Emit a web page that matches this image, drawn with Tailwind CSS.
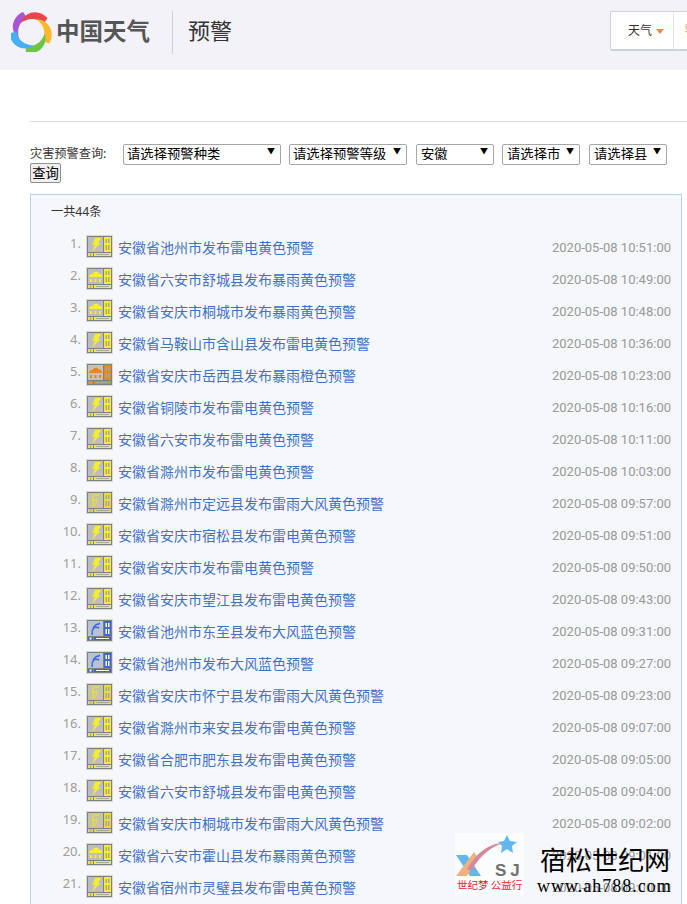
<!DOCTYPE html>
<html lang="zh-CN">
<head>
    <meta charset="UTF-8">
    <title>预警</title>
    <script src="https://cdn.jsdelivr.net/npm/@tailwindcss/browser@4"></script>
</head>
<body class="bg-white h-[904px] overflow-hidden relative font-['Noto_Sans','Noto_Sans_CJK_SC',sans-serif]">
<header class="h-[70px] bg-[#f2f2f8] flex items-start overflow-hidden">
    <svg class="ml-[11px] mt-[11px] w-[41px] h-[41px] shrink-0" viewBox="11 11 41 41">
        <path fill="#a855d8" d="M23 12C13 16 8 30 19 39C16.500 30 19 21 27.500 18.500Z"/>
        <path fill="#e8474c" transform="rotate(72 31 32)" d="M23 12C13 16 8 30 19 39C16.500 30 19 21 27.500 18.500Z"/>
        <path fill="#fbb829" transform="rotate(144 31 32)" d="M23 12C13 16 8 30 19 39C16.500 30 19 21 27.500 18.500Z"/>
        <path fill="#6cc644" transform="rotate(216 31 32)" d="M23 12C13 16 8 30 19 39C16.500 30 19 21 27.500 18.500Z"/>
        <path fill="#45aef5" transform="rotate(288 31 32)" d="M23 12C13 16 8 30 19 39C16.500 30 19 21 27.500 18.500Z"/>
    </svg>
    <div class="ml-[4px] mt-[14px] text-[23.5px] leading-[34px] font-semibold text-[#555] w-[116px] shrink-0">中国天气</div>
    <div class="w-px h-[43px] mt-[11px] bg-[#cfcfd4] shrink-0"></div>
    <div class="ml-[15px] mt-[14px] text-[22px] leading-[33px] text-[#333] shrink-0">预警</div>
    <div class="ml-auto mt-[11px] w-[77px] h-[40px] bg-white border border-r-0 border-[#cdd2df] border-b-2 rounded-l-[2px] flex shrink-0 overflow-hidden">
        <div class="w-[63px] flex items-center pl-[17px] border-r border-[#e3e6ee] shrink-0">
            <span class="text-[12px] text-[#333]">天气</span>
            <span class="ml-[4px] mt-[2px] w-0 h-0 border-l-[4px] border-r-[4px] border-t-[5px] border-l-transparent border-r-transparent border-t-[#ee8a3c]"></span>
        </div>
        <span class="pl-[10px] text-[12px] leading-[38px] text-[#e0b890] whitespace-nowrap">导航</span>
    </div>
</header>

<main class="pl-[30px]">
    <div class="mt-[51px] h-px bg-[#ddd]"></div>

    <form class="mt-[20px] h-[41px] pr-[20px] text-[#333]">
        <div class="flex items-center h-[21px]">
            <label class="text-[12.2px] w-[93px] shrink-0 mt-[3px]">灾害预警查询:</label>
            <div class="relative w-[158px] shrink-0">
                <select class="appearance-none w-full h-[21px] border border-[#a6a6a6] rounded-[2px] pl-[3px] pb-[4px] text-[13.33px] text-black bg-white"><option>请选择预警种类</option></select>
                <span class="absolute right-[6px] top-[1px] text-[8px] leading-[18px] text-black">▼</span>
            </div>
            <div class="relative w-[118px] ml-[8px] shrink-0">
                <select class="appearance-none w-full h-[21px] border border-[#a6a6a6] rounded-[2px] pl-[3px] pb-[4px] text-[13.33px] text-black bg-white"><option>请选择预警等级</option></select>
                <span class="absolute right-[6px] top-[1px] text-[8px] leading-[18px] text-black">▼</span>
            </div>
            <div class="relative w-[78px] ml-[9px] shrink-0">
                <select class="appearance-none w-full h-[21px] border border-[#a6a6a6] rounded-[2px] pl-[4px] pb-[4px] text-[13.33px] text-black bg-white"><option>安徽</option></select>
                <span class="absolute right-[6px] top-[1px] text-[8px] leading-[18px] text-black">▼</span>
            </div>
            <div class="relative w-[78px] ml-[8px] shrink-0">
                <select class="appearance-none w-full h-[21px] border border-[#a6a6a6] rounded-[2px] pl-[4px] pb-[4px] text-[13.33px] text-black bg-white"><option>请选择市</option></select>
                <span class="absolute right-[6px] top-[1px] text-[8px] leading-[18px] text-black">▼</span>
            </div>
            <div class="relative w-[78px] ml-[9px] shrink-0">
                <select class="appearance-none w-full h-[21px] border border-[#a6a6a6] rounded-[2px] pl-[4px] pb-[4px] text-[13.33px] text-black bg-white"><option>请选择县</option></select>
                <span class="absolute right-[6px] top-[1px] text-[8px] leading-[18px] text-black">▼</span>
            </div>
        </div>
        <button type="button" class="block w-[31px] h-[20px] bg-[#efefef] border border-[#8f8f8f] rounded-[2px] text-[13.33px] leading-[16px] text-black">查询</button>
    </form>

    <section class="mt-[11px] w-[652px] h-[720px] bg-[#f5f7fb] border border-[#b9cfe6] border-b-0">
        <div class="pl-[20px] pt-[8px] h-[36px] text-[12.2px] leading-[17px] text-[#333]">一共44条</div>
        <ul id="alerts"></ul>
    </section>
</main>

<!-- watermark pasted over the page -->
<div class="absolute left-[455px] top-[833px] w-[220px] h-[66px] flex pointer-events-none">
    <div class="w-[69px] h-[62px] bg-white/60 shrink-0">
        <svg class="w-[69px] h-[45px]" viewBox="0 0 69 45">
            <path d="M1 22H12L26 43H15Z" fill="#62b8ee"/>
            <path d="M1 43L19 19L23 25L12 43Z" fill="#f0b080"/>
            <path d="M12 37C20 20 36 9 50 10C38 12 25 22 17 37Z" fill="#d58a9c"/>
            <path d="M52 2L55 8L62 9L57 13L58 20L52 16L46 20L47 13L43 9L49 8Z" fill="#62b8ee"/>
            <text x="40" y="43" font-family="Liberation Sans" font-weight="700" font-size="17" letter-spacing="4" fill="#6f6f6f">SJ</text>
        </svg>
        <div class="text-[10.5px] leading-[14px] text-[#e5252c] whitespace-nowrap pl-[2px] font-['Noto_Sans_CJK_SC',sans-serif]">世纪梦 公益行</div>
    </div>
    <div class="ml-[16px] text-black">
        <div class="text-[26px] leading-[34px] mt-[9px] whitespace-nowrap font-['Noto_Sans_CJK_SC',sans-serif]">宿松世纪网</div>
        <div class="-ml-[3px] text-[18px] leading-[22px] mt-[-1px] tracking-[1px] font-['Liberation_Serif',serif] whitespace-nowrap">www.ah788.com</div>
    </div>
</div>

<script>
    const ALERTS = [
        ['安徽省池州市发布雷电黄色预警', '10:51:00', 'bolt'],
        ['安徽省六安市舒城县发布暴雨黄色预警', '10:49:00', 'rain'],
        ['安徽省安庆市桐城市发布暴雨黄色预警', '10:48:00', 'rain'],
        ['安徽省马鞍山市含山县发布雷电黄色预警', '10:36:00', 'bolt'],
        ['安徽省安庆市岳西县发布暴雨橙色预警', '10:23:00', 'rainOrange'],
        ['安徽省铜陵市发布雷电黄色预警', '10:16:00', 'bolt'],
        ['安徽省六安市发布雷电黄色预警', '10:11:00', 'bolt'],
        ['安徽省滁州市发布雷电黄色预警', '10:03:00', 'bolt'],
        ['安徽省滁州市定远县发布雷雨大风黄色预警', '09:57:00', 'storm'],
        ['安徽省安庆市宿松县发布雷电黄色预警', '09:51:00', 'bolt'],
        ['安徽省安庆市发布雷电黄色预警', '09:50:00', 'bolt'],
        ['安徽省安庆市望江县发布雷电黄色预警', '09:43:00', 'bolt'],
        ['安徽省池州市东至县发布大风蓝色预警', '09:31:00', 'wind'],
        ['安徽省池州市发布大风蓝色预警', '09:27:00', 'wind'],
        ['安徽省安庆市怀宁县发布雷雨大风黄色预警', '09:23:00', 'storm'],
        ['安徽省滁州市来安县发布雷电黄色预警', '09:07:00', 'bolt'],
        ['安徽省合肥市肥东县发布雷电黄色预警', '09:05:00', 'bolt'],
        ['安徽省六安市舒城县发布雷电黄色预警', '09:04:00', 'bolt'],
        ['安徽省安庆市桐城市发布雷雨大风黄色预警', '09:02:00', 'storm'],
        ['安徽省六安市霍山县发布暴雨黄色预警', '09:01:00', 'rain'],
        ['安徽省宿州市灵璧县发布雷电黄色预警', '09:00:00', 'bolt']
    ];

    // little warning sign: grey panel with a symbol, coloured side bar and strip
    function signIcon(type) {
        const colors = {
            bolt: ['#f5ee2a', '#bdbdbd'],
            rain: ['#f5ee2a', '#bdbdbd'],
            rainOrange: ['#e8871e', '#c9c2b4'],
            storm: ['#e6da4a', '#c4c4a8'],
            wind: ['#3c67d8', '#b9c2d6']
        };
        const [main, panel] = colors[type];
        const cloud = `<path d="M3 10C3 7.500 5 7 6.500 7C7.500 4 12 4 13 6.500C15 6.500 16.500 8 16 10Z" fill="${main}"/><path d="M4 12h2v3h-2zM8.500 12h2v3h-2zM13 12h2v3h-2z" fill="${main}"/>`;
        const symbols = {
            bolt: `<path d="M9 3H15L12 8H14.500L6 17L9 10H6.500Z" fill="${main}"/>`,
            rain: cloud,
            rainOrange: cloud,
            storm: `<path d="M6 4H13M7 4V16M7 9H12M11 9L9 15" stroke="${main}" stroke-width="1.500" fill="none"/>`,
            wind: `<path d="M6 16C6 9 8 5 14 4.500M7 9C9 8 11 8 13 9" stroke="${main}" stroke-width="1.500" fill="none"/>`
        };
        const glyph = type === 'wind' ? '#ffffff' : '#a8a88a';
        return `<svg class="w-[27px] h-[23px] shrink-0" viewBox="0 0 27 23">
            <rect width="27" height="23" fill="#d8d8d8"/>
            <rect x="1" y="1" width="25" height="21" fill="#808080"/>
            <rect x="2" y="2" width="15" height="15" fill="${panel}"/>
            ${symbols[type]}
            <rect x="18" y="2" width="7" height="15" fill="${main}"/>
            <path d="M19.500 4h1.500v4h-1.500zM22 4h1.500v4h-1.500zM19.500 10h1.500v5h-1.500zM22 10h1.500v5h-1.500z" fill="${glyph}"/>
            <rect x="2" y="18" width="5" height="3" fill="${main}"/>
            <rect x="8" y="18" width="17" height="3" fill="${main}"/>
            <rect x="3.500" y="18.500" width="2" height="2" fill="${glyph}"/>
            <rect x="10" y="19" width="13" height="1" fill="${glyph}"/>
        </svg>`;
    }

    document.getElementById('alerts').innerHTML = ALERTS.map(([title, time, type], i) => `
        <li class="h-[32px] flex items-start text-[14px]">
            <span class="w-[50px] shrink-0 text-right text-[13px] leading-[18px] mt-[3px] text-[#a09c98]">${i + 1}.</span>
            <span class="ml-[5px] mt-[4px]">${signIcon(type)}</span>
            <a href="#" class="ml-[5px] mt-[7px] leading-[20px] text-[#3f72c4] whitespace-nowrap">${title}</a>
            <span class="ml-auto mr-[10px] mt-[7px] leading-[20px] text-[13px] text-[#999] font-['Roboto',sans-serif]">2020-05-08 ${time}</span>
        </li>`).join('');
</script>
</body>
</html>
